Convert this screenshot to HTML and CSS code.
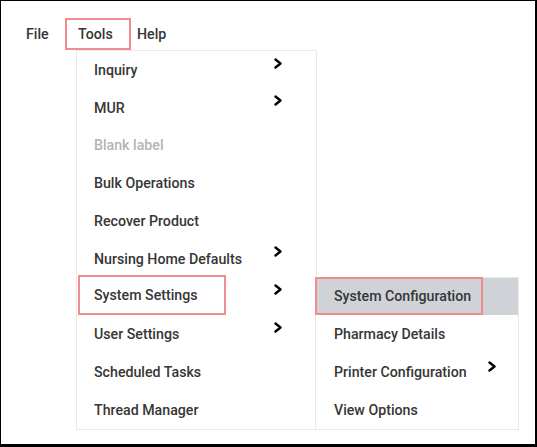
FILE: index.html
```html
<!DOCTYPE html>
<html>
<head>
<meta charset="utf-8">
<link rel="stylesheet" href="styles.css">
</head>
<body>
<div class="frame">
  <nav class="menubar">
    <div class="top-item file">File</div>
    <div class="top-item tools">Tools
      <div class="menu">
        <div class="row">Inquiry<svg class="chev" viewBox="0 0 9 11"><polyline points="1.5,1.5 6.5,5.5 1.5,9.5"/></svg></div>
        <div class="row">MUR<svg class="chev" viewBox="0 0 9 11"><polyline points="1.5,1.5 6.5,5.5 1.5,9.5"/></svg></div>
        <div class="row disabled">Blank label</div>
        <div class="row">Bulk Operations</div>
        <div class="row">Recover Product</div>
        <div class="row">Nursing Home Defaults<svg class="chev" viewBox="0 0 9 11"><polyline points="1.5,1.5 6.5,5.5 1.5,9.5"/></svg></div>
        <div class="row open">
          <span class="sel">System Settings</span><svg class="chev" viewBox="0 0 9 11"><polyline points="1.5,1.5 6.5,5.5 1.5,9.5"/></svg>
          <div class="submenu">
            <div class="row active"><span class="sel2">System Configuration</span></div>
            <div class="row">Pharmacy Details</div>
            <div class="row">Printer Configuration<svg class="chev chev2" viewBox="0 0 9 11"><polyline points="1.5,1.5 6.5,5.5 1.5,9.5"/></svg></div>
            <div class="row">View Options</div>
          </div>
        </div>
        <div class="row">User Settings<svg class="chev" viewBox="0 0 9 11"><polyline points="1.5,1.5 6.5,5.5 1.5,9.5"/></svg></div>
        <div class="row">Scheduled Tasks</div>
        <div class="row">Thread Manager</div>
      </div>
    </div>
    <div class="top-item help">Help</div>
  </nav>
</div>
</body>
</html>
```

FILE: styles.css
```css
* { box-sizing: border-box; }
html, body { margin: 0; padding: 0; background: #fff; }
.frame {
  width: 537px;
  height: 447px;
  border-style: solid;
  border-color: #000;
  border-width: 1px 2px 3px 1px;
  background: #fff;
  font-family: Roboto, "Noto Sans", sans-serif;
  font-weight: 500;
  font-size: 14.2px;
  color: #363636;
  position: relative;
}
.menubar {
  display: flex;
  align-items: center;
  padding: 17px 0 0 25px;
}
.top-item {
  height: 32px;
  line-height: 32px;
}
.file { width: 23px; flex: none; }
.tools {
  position: relative;
  flex: none;
  margin-left: 16px;
  border: 2px solid #f28b8b;
  padding: 0 11px;
  width: 66px;
  line-height: 28px;
}
.help { margin-left: 6px; }
.menu {
  position: absolute;
  left: 9px;
  top: 30px;
  width: 241px;
  border: 1px solid #e8e8e8;
  background: #fff;
  line-height: normal;
  z-index: 2;
}
.row {
  position: relative;
  height: 37.75px;
  display: flex;
  align-items: center;
  padding-left: 17px;
  white-space: nowrap;
}
.disabled { color: #b4b4b4; }
.chev {
  position: absolute;
  left: 197px;
  top: 6.5px;
  width: 9px;
  height: 11px;
  fill: none;
  stroke: #000;
  stroke-width: 2.4;
  stroke-linecap: round;
  stroke-linejoin: round;
}
.sel {
  display: flex;
  align-items: center;
  margin-left: -16px;
  margin-top: -3px;
  width: 148px;
  height: 40px;
  padding-left: 14px;
  border: 2px solid #f28b8b;
}
.submenu {
  position: absolute;
  left: 238px;
  top: -1px;
  width: 204px;
  border: 1px solid #e8e8e8;
  background: #fff;
}
.submenu .row { padding-left: 18px; }
.submenu .row.active {
  background: #cfd3d7;
  padding-left: 0;
  align-items: stretch;
}
.sel2 {
  display: flex;
  align-items: center;
  margin-left: -1px;
  margin-top: -1px;
  width: 168px;
  height: 38.75px;
  padding-left: 17px;
  border: 2px solid #f28b8b;
}
.chev2 { left: 172px; top: 8px; }
```
